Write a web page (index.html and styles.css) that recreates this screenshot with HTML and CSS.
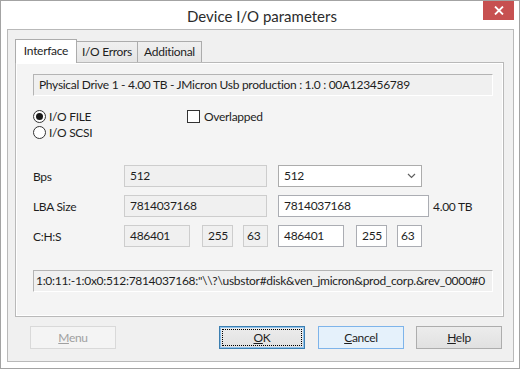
FILE: index.html
```html
<!DOCTYPE html>
<html lang="en">
<head>
<meta charset="UTF-8">
<title>Device I/O parameters</title>
<link rel="stylesheet" href="styles.css">
</head>
<body>

<div class="window">
<div class="titlebar">
<span></span>
<span class="title">Device I/O parameters</span>
<button class="close"><svg width="10" height="9" viewBox="0 0 10 9"><path d="M1 0.5L9 8.5M9 0.5L1 8.5" stroke="#fff" stroke-width="1.8"/></svg></button>
</div>

<div class="client">
<div class="tabs">
<div class="tab active">Interface</div>
<div class="tab t2">I/O Errors</div>
<div class="tab t3">Additional</div>
</div>

<div class="page">
<div class="drive">Physical Drive 1 - 4.00 TB - JMicron Usb production : 1.0 : 00A123456789</div>

<div class="options">
<label class="opt"><span class="radio on"></span>I/O FILE</label>
<label class="opt"><span class="box"></span>Overlapped</label>
<label class="opt"><span class="radio"></span>I/O SCSI</label>
</div>

<div class="fields">
<span class="lbl">Bps</span>
<span class="ro wide">512</span>
<span class="edit sel">512<svg width="9" height="6" viewBox="0 0 9 6"><path d="M1 1L4.5 4.5L8 1" fill="none" stroke="#606060" stroke-width="1.2"/></svg></span>
<span></span>

<span class="lbl">LBA Size</span>
<span class="ro wide">7814037168</span>
<span class="edit lba">7814037168</span>
<span class="lbl tb">4.00 TB</span>

<span class="lbl">C:H:S</span>
<span class="chs">
<span class="ro c">486401</span><span class="ro h">255</span><span class="ro s">63</span>
</span>
<span class="chs">
<span class="edit c">486401</span><span class="edit h">255</span><span class="edit s">63</span>
</span>
<span></span>
</div>

<div class="path">1:0:11:-1:0x0:512:7814037168:"\\?\usbstor#disk&amp;ven_jmicron&amp;prod_corp.&amp;rev_0000#0</div>
</div>

<div class="buttons">
<button class="btn off"><u>M</u>enu</button>
<button class="btn def"><span><u>O</u>K</span></button>
<button class="btn hot"><u>C</u>ancel</button>
<button class="btn"><u>H</u>elp</button>
</div>
</div>
</div>

</body>
</html>
```

FILE: styles.css
```css
*{box-sizing:border-box}
body{margin:0;font-family:Lato,"Noto Sans",sans-serif;font-size:12px;letter-spacing:-0.3px;color:#1e1e1e}

.window{width:520px;height:369px;border:1px solid #a3a3a3;background:#fff;display:flex;flex-direction:column;padding:0 5px 6px 6px}

.titlebar{height:28px;display:grid;grid-template-columns:1fr auto 1fr;align-items:start}
.title{font-size:15px;letter-spacing:0;line-height:30px;color:#2b2b2b;padding-left:3px}
.close{justify-self:end;width:31px;height:19px;border:none;background:#c75050;display:flex;align-items:center;justify-content:center;padding:0}

.client{flex:1;border:1px solid #b9b9b9;background:#f0f0f0;padding:9px 11px 0 7px;display:flex;flex-direction:column}

.tabs{display:flex;align-items:flex-end;height:23px;position:relative;z-index:1}
.tab{height:21px;width:62px;margin-left:-1px;border:1px solid #acacac;border-bottom:none;background:linear-gradient(#f0f0f0,#e5e5e5);text-align:center;line-height:20px}
.tab.active{height:24px;width:62px;margin-left:0;margin-bottom:-1px;background:#fff;line-height:21px}
.tab.t3{width:65px}

.page{height:255px;margin-right:-2px;border:1px solid #b9b9b9;box-shadow:inset 0 0 0 1px #fff;background:#f4f4f4;padding:11px 10px 24px 17px;display:flex;flex-direction:column}

.drive,.path{height:22px;border:1px solid #fff;border-top-color:#b4b4b4;border-left-color:#b4b4b4;background:#f0f0f0;line-height:20px;white-space:nowrap;overflow:hidden}
.drive{padding-left:5px}
.path{padding-left:2px;margin-top:23px}

.options{margin-top:12px;display:grid;grid-template-columns:154px auto;grid-auto-rows:16px}
.opt{display:flex;align-items:center;gap:3px}
.radio{width:13px;height:13px;border:1px solid #333;border-radius:50%;background:#fff;display:flex;align-items:center;justify-content:center}
.radio.on::after{content:"";width:7px;height:7px;border-radius:50%;background:#1a1a1a}
.box{width:13px;height:13px;border:1px solid #333;background:#fff;margin-right:1px}

.fields{margin-top:25px;display:grid;grid-template-columns:91px 154px 154px auto;grid-auto-rows:22px;row-gap:8px;align-items:center}
.ro,.edit{height:22px;line-height:20px;padding-left:5px;display:block}
.ro{background:#f0f0f0;border:1px solid #cdcdcd}
.edit{background:#fff;border:1px solid #abadb3}
.ro.wide{width:143px}
.sel{width:144px;display:flex;justify-content:space-between;align-items:center;padding-right:5px;border-color:#acacac}
.lba{width:151px}
.tb{padding-left:1px}
.chs{display:flex;height:22px}
.chs .c{width:66px}
.chs .h{width:31px;margin-left:12px}
.chs .s{width:25px;margin-left:10px;padding-left:3px}

.buttons{display:flex;gap:12px;margin-top:9px}
.btn{width:86px;height:23px;font:inherit;letter-spacing:inherit;color:#1e1e1e;background:linear-gradient(#ececec,#e1e1e1);border:1px solid #adadad;padding:0}
.btn.off{margin-left:15px;margin-right:auto;background:#f4f4f4;border-color:#d9d9d9;color:#a0a0a0}
.btn.def{border-color:#3c7fb1;box-shadow:inset 0 0 0 1px #8fc2ec;padding:2px}
.btn.def span{display:block;height:100%;border:1px dotted #000;line-height:15px}
.btn.hot{margin-left:1px;background:#e5f1fb;border-color:#7eb4ea}
```
